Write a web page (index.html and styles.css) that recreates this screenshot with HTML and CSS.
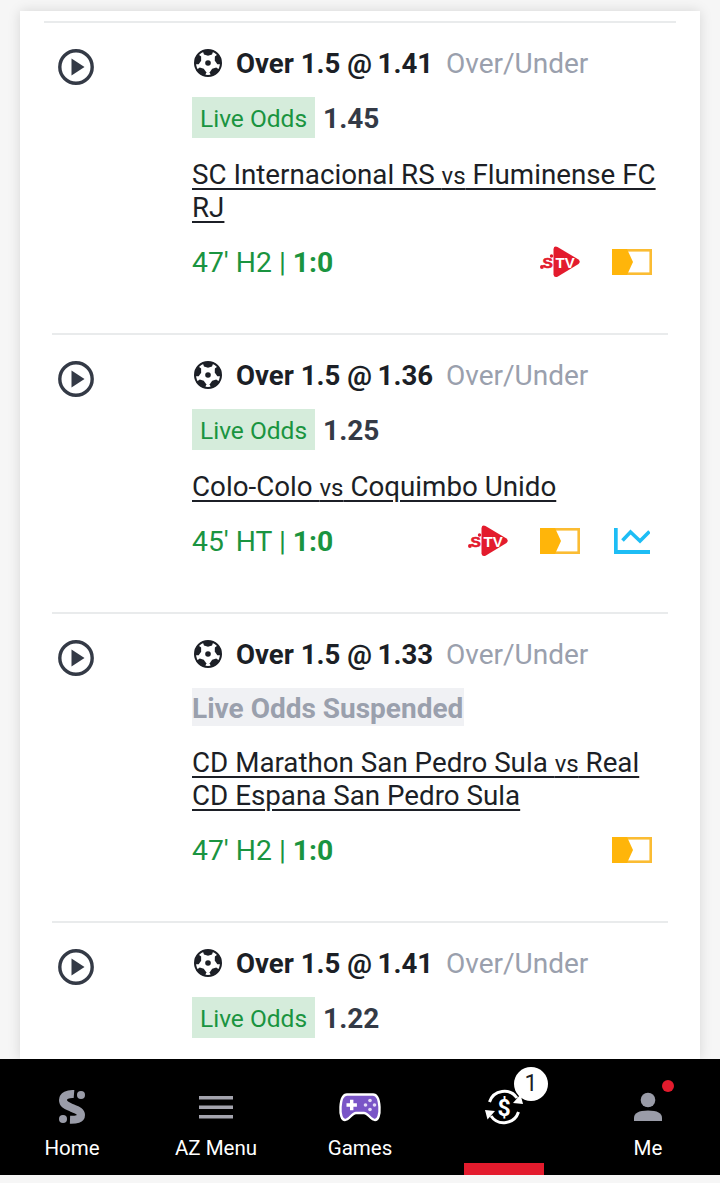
FILE: index.html
```html
<!DOCTYPE html>
<html lang="en">
<head>
  <meta charset="UTF-8" />
  <meta name="viewport" content="width=device-width, initial-scale=1.0"/>
  <title>My Bets</title>
  <link rel="stylesheet" href="styles.css">
</head>
<body>

  <svg class="defs" width="0" height="0">
    <defs>
      <symbol id="play" viewBox="0 0 36 36">
        <circle cx="18" cy="18" r="16.2" fill="none" stroke="#343a46" stroke-width="3.4"/>
        <path d="M13.5 9.5 L26.5 18 L13.5 26.500 Z" fill="#343a46"/>
      </symbol>
      <symbol id="ball" viewBox="0 0 28 28">
        <circle cx="14" cy="14" r="13" fill="#fff" stroke="#1c1f26" stroke-width="2"/>
        <circle cx="14" cy="14" r="2.800" fill="#1c1f26"/>
        <path d="M8.500 1.500 H19.500 L18 5.500 L14 6.800 L10 5.500 Z" fill="#1c1f26"/>
        <path d="M8.500 1.500 H19.500 L18 5.500 L14 6.800 L10 5.500 Z" fill="#1c1f26" transform="rotate(72 14 14)"/>
        <path d="M8.500 1.500 H19.500 L18 5.500 L14 6.800 L10 5.500 Z" fill="#1c1f26" transform="rotate(144 14 14)"/>
        <path d="M8.500 1.500 H19.500 L18 5.500 L14 6.800 L10 5.500 Z" fill="#1c1f26" transform="rotate(216 14 14)"/>
        <path d="M8.500 1.500 H19.500 L18 5.500 L14 6.800 L10 5.500 Z" fill="#1c1f26" transform="rotate(288 14 14)"/>
      </symbol>
      <symbol id="stv" viewBox="0 0 40 32">
        <path d="M13.500 3 Q14 -.5 17.500 1 L38.500 13.500 Q41 15.800 38.500 18 L17.500 30.800 Q14 32 13.500 28.500 Z" fill="#e31b2d"/>
        <circle cx="11.500" cy="10" r="1.700" fill="#e31b2d"/>
        <circle cx="1.900" cy="21" r="1.900" fill="#e31b2d"/>
        <text x="2.500" y="21.500" class="stv-s">S</text>
        <text x="15.500" y="22" class="stv-text">TV</text>
      </symbol>
      <symbol id="ticket" viewBox="0 0 40 26">
        <rect x="1.300" y="1.300" width="37.400" height="23.400" fill="#fff" stroke="#fbbc33" stroke-width="2.600"/>
        <path d="M0 0 H15 L21 13 L15 26 H0 Z" fill="#ffb50a"/>
      </symbol>
      <symbol id="chart" viewBox="0 0 36 26">
        <path d="M1.800 0 V24 H36" fill="none" stroke="#1dbdf5" stroke-width="3.800"/>
        <path d="M8.500 12.500 L16.500 4 L26 13 L35.500 3.500" fill="none" stroke="#1dbdf5" stroke-width="3.600"/>
      </symbol>
    </defs>
  </svg>

  <main class="card">
    <div class="top-line"></div>

    <section class="bet">
      <svg class="play"><use href="#play"/></svg>
      <div class="info">
        <div class="pick"><svg class="ball"><use href="#ball"/></svg><b>Over 1.5 @&#8201;1.41</b><span class="market">Over/Under</span></div>
        <div class="odds"><span class="badge">Live Odds</span><b>1.45</b></div>
        <a class="match" href="#">SC Internacional RS <small>vs</small> Fluminense FC RJ</a>
        <div class="state">
          <span class="score">47' H2 | <b>1:0</b></span>
          <div class="icons">
            <svg class="i-stv"><use href="#stv"/></svg>
            <svg class="i-ticket"><use href="#ticket"/></svg>
          </div>
        </div>
      </div>
    </section>

    <section class="bet">
      <svg class="play"><use href="#play"/></svg>
      <div class="info">
        <div class="pick"><svg class="ball"><use href="#ball"/></svg><b>Over 1.5 @&#8201;1.36</b><span class="market">Over/Under</span></div>
        <div class="odds"><span class="badge">Live Odds</span><b>1.25</b></div>
        <a class="match" href="#">Colo-Colo <small>vs</small> Coquimbo Unido</a>
        <div class="state">
          <span class="score">45' HT | <b>1:0</b></span>
          <div class="icons">
            <svg class="i-stv"><use href="#stv"/></svg>
            <svg class="i-ticket"><use href="#ticket"/></svg>
            <svg class="i-chart"><use href="#chart"/></svg>
          </div>
        </div>
      </div>
    </section>

    <section class="bet">
      <svg class="play"><use href="#play"/></svg>
      <div class="info">
        <div class="pick"><svg class="ball"><use href="#ball"/></svg><b>Over 1.5 @&#8201;1.33</b><span class="market">Over/Under</span></div>
        <div class="odds suspended"><span class="badge">Live Odds Suspended</span></div>
        <a class="match" href="#">CD Marathon San Pedro Sula <small>vs</small> Real CD Espana San Pedro Sula</a>
        <div class="state">
          <span class="score">47' H2 | <b>1:0</b></span>
          <div class="icons">
            <svg class="i-ticket"><use href="#ticket"/></svg>
          </div>
        </div>
      </div>
    </section>

    <section class="bet">
      <svg class="play"><use href="#play"/></svg>
      <div class="info">
        <div class="pick"><svg class="ball"><use href="#ball"/></svg><b>Over 1.5 @&#8201;1.41</b><span class="market">Over/Under</span></div>
        <div class="odds"><span class="badge">Live Odds</span><b>1.22</b></div>
      </div>
    </section>
  </main>

  <nav class="tabbar">
    <a class="tab" href="#">
      <svg class="tab-icon" viewBox="0 0 36 36">
        <path d="M20 5 C14 4.500 9 7 9 11 C9 16 14 17 18 19 C23 21 27 22 27 26 C27 30 22 31 16 30.800" fill="none" stroke="#9a9ca8" stroke-width="8"/>
        <circle cx="27" cy="6" r="4" fill="#9a9ca8"/>
        <circle cx="9" cy="30" r="4" fill="#9a9ca8"/>
      </svg>
      <span>Home</span>
    </a>
    <a class="tab" href="#">
      <svg class="tab-icon" viewBox="0 0 36 36">
        <path d="M1 7 H35 V10.500 H1 Z M1 16.500 H35 V20 H1 Z M1 26 H35 V29.500 H1 Z" fill="#a3a3ad"/>
      </svg>
      <span>AZ Menu</span>
    </a>
    <a class="tab" href="#">
      <svg class="tab-icon games" viewBox="0 0 46 36">
        <path d="M10 5.500 H36 C40 5.500 42 10 42.500 18 C43 26 41 31 38 31 C34 31 31 24 27 24 H19 C15 24 12 31 8 31 C5 31 3 26 3.500 18 C4 10 6 5.500 10 5.500 Z" fill="#7a55c7" stroke="#fff" stroke-width="2.400"/>
        <path d="M9.500 14.300 H13 V10.800 H16.400 V14.300 H19.900 V17.700 H16.400 V21.200 H13 V17.700 H9.500 Z" fill="#fff"/>
        <circle cx="33" cy="11.500" r="1.800" fill="#e6dcf7"/>
        <circle cx="33" cy="20.500" r="1.800" fill="#e6dcf7"/>
        <circle cx="28.500" cy="16" r="1.800" fill="#e6dcf7"/>
        <circle cx="37.500" cy="16" r="1.800" fill="#e6dcf7"/>
      </svg>
      <span>Games</span>
    </a>
    <a class="tab active" href="#">
      <span class="cashout">
        <svg class="tab-icon" viewBox="0 0 40 40">
          <path d="M5.500 15 A15.500 15.500 0 0 1 33 11" fill="none" stroke="#fff" stroke-width="3"/>
          <path d="M34.500 25 A15.500 15.500 0 0 1 7 29" fill="none" stroke="#fff" stroke-width="3"/>
          <path d="M29 16 L39 17 L36.500 7.500 Z" fill="#fff"/>
          <path d="M11 24 L1 23 L3.500 32.500 Z" fill="#fff"/>
          <text x="20" y="28.500" class="dollar">$</text>
        </svg>
        <span class="count">1</span>
      </span>
    </a>
    <a class="tab" href="#">
      <span class="me">
        <svg class="tab-icon" viewBox="0 0 36 36">
          <circle cx="18" cy="11" r="7.300" fill="#9a9ca8"/>
          <path d="M4 32 V29 Q4 21.500 18 21.500 Q32 21.500 32 29 V32 Z" fill="#9a9ca8"/>
        </svg>
        <i class="dot"></i>
      </span>
      <span>Me</span>
    </a>
  </nav>

</body>
</html>
```

FILE: styles.css
```css
* { box-sizing: border-box; margin: 0; padding: 0; }

body {
  font-family: Roboto, sans-serif;
  background: #f6f6f6;
  color: #1c1f26;
  height: 1183px;
  overflow: hidden;
  display: flex;
  flex-direction: column;
  padding-top: 11px;
}

.defs { position: absolute; }

.card {
  flex: 1;
  min-height: 0;
  overflow: hidden;
  margin: 0 20px;
  background: #fff;
  box-shadow: 0 0 12px #00000022;
}

.top-line {
  height: 2px;
  margin: 10px 24px 0;
  background: #e9ebec;
}

.bet {
  display: flex;
  margin: 0 32px;
  padding-top: 25px;
  padding-bottom: 54px;
  border-bottom: 2px solid #e9ebec;
}

.play {
  width: 36px;
  height: 36px;
  margin: 1px 98px 0 6px;
  flex-shrink: 0;
}

.info { flex: 1; min-width: 0; }

.pick {
  display: flex;
  align-items: center;
  height: 30px;
  font-size: 28px;
}

.pick b { font-size: 27.6px; }

.ball {
  width: 28px;
  height: 28px;
  margin: 0 14px 0 2px;
}

.market {
  margin-left: 13px;
  color: #9aa0ad;
}

.odds {
  display: flex;
  align-items: center;
  margin-top: 19px;
  font-size: 28px;
  color: #343a46;
}

.odds b { padding-top: 2px; }

.badge {
  background: #d5ecdb;
  color: #1a9440;
  font-size: 24.5px;
  padding: 0 8px;
  height: 41px;
  line-height: 43px;
  margin-right: 8px;
}

.suspended .badge {
  background: #f0f1f4;
  color: #9aa0ad;
  font-weight: 700;
  font-size: 28px;
  height: 38px;
  line-height: 41px;
  padding: 0 1px 0 0;
}

.match {
  display: block;
  margin-top: 20px;
  font-size: 27.75px;
  line-height: 33px;
  color: #1c1f26;
  text-decoration: underline;
  text-decoration-thickness: 2px;
  text-underline-offset: 4px;
}

.match small { font-size: 24px; line-height: 1; }

.state {
  display: flex;
  justify-content: space-between;
  align-items: center;
  margin-top: 21px;
  height: 34px;
  padding-right: 16px;
}

.score { font-size: 28.3px; color: #1a9440; }

.icons {
  display: flex;
  align-items: center;
  gap: 32px;
}

.i-stv { width: 40px; height: 32px; }
.i-ticket { width: 40px; height: 26px; }
.i-chart { width: 36px; height: 26px; margin: 0 2px; }

.stv-text {
  font-family: "Liberation Sans", sans-serif;
  font-weight: 700;
  font-size: 15px;
  fill: #fff;
}

.stv-s {
  font-family: "Liberation Sans", sans-serif;
  font-weight: 700;
  font-size: 15.5px;
  fill: #e31b2d;
  stroke: #e31b2d;
  stroke-width: .6;
}

.tabbar {
  display: flex;
  height: 116px;
  margin-bottom: 8px;
  background: #000;
  flex-shrink: 0;
}

.tab {
  position: relative;
  width: 144px;
  display: flex;
  flex-direction: column;
  align-items: center;
  padding-top: 30px;
  color: #fff;
  font-size: 20.5px;
  text-decoration: none;
}

.tab-icon {
  display: block;
  width: 36px;
  height: 36px;
  margin-bottom: 11px;
}

.tab-icon.games { width: 46px; }

.tab.active::after {
  content: "";
  position: absolute;
  left: 32px;
  bottom: 0;
  width: 80px;
  height: 12px;
  background: #e31b2d;
}

.cashout, .me { position: relative; display: block; }

.cashout .tab-icon { width: 40px; height: 40px; margin-top: -2px; }

.dollar {
  font-family: Roboto, sans-serif;
  font-weight: 700;
  font-size: 23px;
  fill: #fff;
  text-anchor: middle;
}

.count {
  position: absolute;
  left: 30px;
  top: -22px;
  width: 34px;
  height: 34px;
  border-radius: 50%;
  background: #fff;
  color: #1c1f26;
  font-size: 23px;
  line-height: 34px;
  text-align: center;
}

.dot {
  position: absolute;
  left: 32px;
  top: -9px;
  width: 12px;
  height: 12px;
  border-radius: 50%;
  background: #e31b2d;
}
```
